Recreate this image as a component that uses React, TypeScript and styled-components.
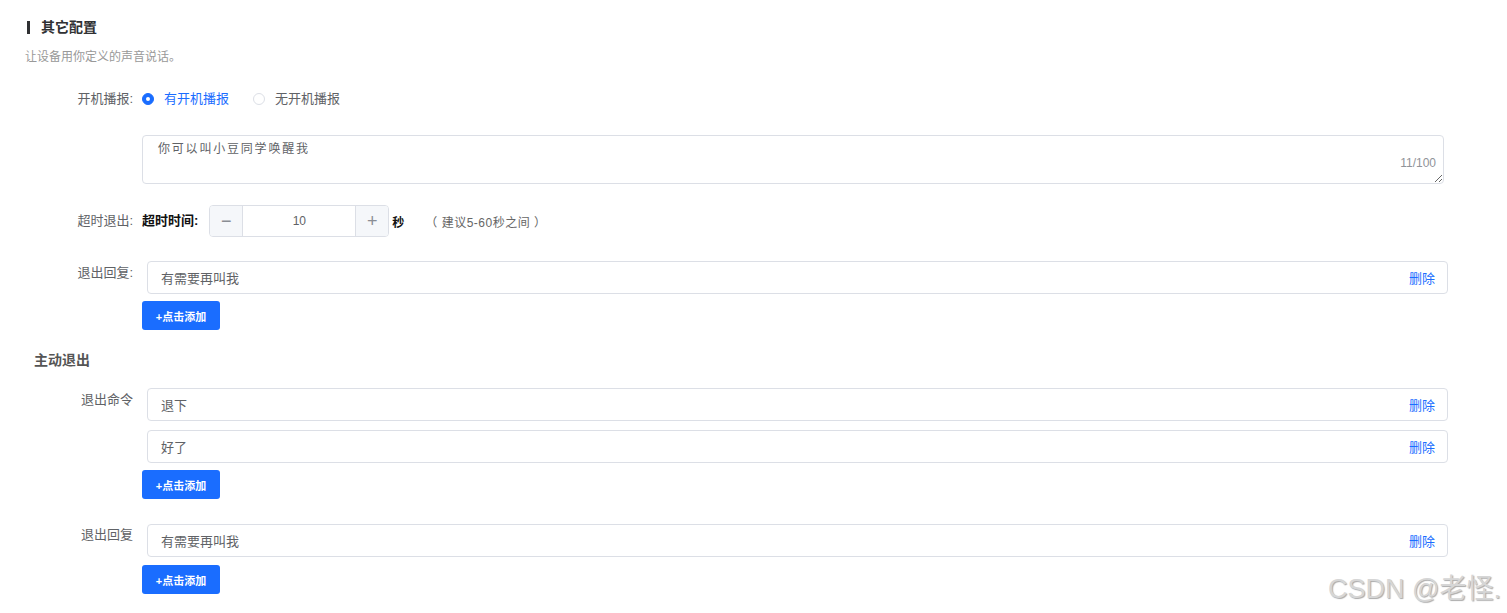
import React from 'react';
import styled, { createGlobalStyle } from 'styled-components';

const GlobalStyle = createGlobalStyle`
  html, body {
    margin: 0;
    padding: 0;
    background: #fff;
  }
  body {
    font-family: "Liberation Sans", "Noto Sans CJK SC", sans-serif;
    font-size: 13px;
    color: #606266;
  }
`;

const Page = styled.div`
  position: relative;
  width: 1507px;
  min-height: 613px;
  padding: 17px 59px 0 25px;
  box-sizing: border-box;
`;

const Title = styled.h3`
  margin: 0 0 0 2px;
  display: flex;
  align-items: center;
  gap: 11px;
  font-size: 14px;
  line-height: 20px;
  font-weight: 700;
  color: #303133;

  &::before {
    content: '';
    width: 3px;
    height: 13px;
    background: #303133;
  }
`;

const SubTitle = styled.p`
  margin: 10px 0 0;
  font-size: 12px;
  line-height: 20px;
  color: #999;
`;

const SectionTitle = styled.h4`
  margin: 20px 0 0 9px;
  font-size: 14px;
  line-height: 20px;
  font-weight: 700;
  color: #555;
`;

const FormRow = styled.div<{ top: number; align?: string }>`
  display: flex;
  align-items: ${p => p.align || 'flex-start'};
  gap: 9px;
  margin-top: ${p => p.top}px;
`;

const Label = styled.div<{ pad?: number }>`
  width: 108px;
  flex-shrink: 0;
  text-align: right;
  line-height: 20px;
  padding-top: ${p => p.pad || 0}px;
  color: #606266;
  white-space: nowrap;
`;

const Content = styled.div`
  flex: 1;
  display: flex;
  flex-direction: column;
  align-items: flex-start;
`;

const RadioGroup = styled.div`
  display: flex;
  align-items: center;
  gap: 24px;
  line-height: 20px;
`;

const RadioItem = styled.label<{ checked?: boolean }>`
  display: flex;
  align-items: center;
  gap: 10px;
  color: ${p => (p.checked ? '#1a6dff' : '#606266')};
  cursor: pointer;
`;

const RadioDot = styled.span<{ checked?: boolean }>`
  width: 12px;
  height: 12px;
  border-radius: 50%;
  box-sizing: border-box;
  border: 1px solid ${p => (p.checked ? '#1a6dff' : '#dcdfe6')};
  background: ${p => (p.checked ? '#1a6dff' : '#fff')};
  display: flex;
  align-items: center;
  justify-content: center;

  &::after {
    content: '';
    width: 4px;
    height: 4px;
    border-radius: 50%;
    background: ${p => (p.checked ? '#fff' : 'transparent')};
  }
`;

const TextAreaWrap = styled.div`
  position: relative;
  width: 1302px;
  margin-left: 117px;
  margin-top: 26px;
`;

const TextArea = styled.textarea`
  display: block;
  width: 100%;
  height: 49px;
  box-sizing: border-box;
  padding: 4px 15px;
  border: 1px solid #dcdfe6;
  border-radius: 4px;
  font-family: "Liberation Sans", "Noto Sans CJK SC", sans-serif;
  font-size: 12px;
  line-height: 18px;
  letter-spacing: 1.8px;
  color: #606266;
  outline: none;
  resize: vertical;
`;

const Counter = styled.span`
  position: absolute;
  right: 8px;
  bottom: 14px;
  font-size: 12px;
  color: #909399;
`;

const StrongText = styled.span`
  color: #111;
  font-weight: 700;
  line-height: 20px;
`;

const NumberBox = styled.div`
  display: flex;
  width: 180px;
  height: 32px;
  margin-left: 11px;
  border: 1px solid #dcdfe6;
  border-radius: 4px;
  box-sizing: border-box;
  overflow: hidden;
`;

const StepButton = styled.button`
  width: 33px;
  flex-shrink: 0;
  border: none;
  padding: 0;
  background: #f5f7fa;
  color: #8a8d94;
  font-size: 18px;
  font-weight: 300;
  display: flex;
  align-items: center;
  justify-content: center;
  cursor: pointer;

  &:first-child {
    border-right: 1px solid #dcdfe6;
  }
  &:last-child {
    border-left: 1px solid #dcdfe6;
  }
`;

const NumberValue = styled.div`
  flex: 1;
  display: flex;
  align-items: center;
  justify-content: center;
  font-size: 12px;
  color: #606266;
`;

const Unit = styled.span`
  margin-left: 3px;
  color: #111;
  font-weight: 700;
  font-size: 12px;
`;

const Hint = styled.span`
  margin-left: 21px;
  color: #666;
  font-size: 12px;
  letter-spacing: 0.5px;
`;

const TimeoutLine = styled.div`
  display: flex;
  align-items: center;
`;

const ItemList = styled.div`
  display: flex;
  flex-direction: column;
  gap: 9px;
  width: 1301px;
  margin-left: 5px;
`;

const ItemInput = styled.div`
  height: 33px;
  box-sizing: border-box;
  border: 1px solid #dcdfe6;
  border-radius: 4px;
  padding: 0 12px 0 13px;
  display: flex;
  align-items: center;
  justify-content: space-between;
  color: #606266;
  font-size: 13px;
`;

const DeleteLink = styled.span`
  color: #1a6dff;
  cursor: pointer;
`;

const AddButton = styled.button<{ gap: number }>`
  margin-top: ${p => p.gap}px;
  width: 78px;
  height: 29px;
  border: none;
  border-radius: 3px;
  background: #1a6dff;
  color: #fff;
  font-family: "Liberation Sans", "Noto Sans CJK SC", sans-serif;
  font-size: 11px;
  font-weight: 700;
  cursor: pointer;
`;

const Watermark = styled.div`
  position: absolute;
  right: 6px;
  bottom: 9px;
  font-family: "Liberation Sans", "Noto Sans CJK SC", sans-serif;
  font-size: 27px;
  line-height: 30px;
  color: #d6d6d6;
  text-shadow: 1px 1px 1px #aaa;
  pointer-events: none;
`;

const ItemGroup: React.FC<{ items: string[]; btnGap: number }> = ({ items, btnGap }) => (
  <Content>
    <ItemList>
      {items.map((t, i) => (
        <ItemInput key={i}>
          <span>{t}</span>
          <DeleteLink>删除</DeleteLink>
        </ItemInput>
      ))}
    </ItemList>
    <AddButton gap={btnGap}>+点击添加</AddButton>
  </Content>
);

const App: React.FC = () => {
  return (
    <Page>
      <GlobalStyle />
      <Title>其它配置</Title>
      <SubTitle>让设备用你定义的声音说话。</SubTitle>

      <FormRow top={22}>
        <Label>开机播报:</Label>
        <RadioGroup>
          <RadioItem checked>
            <RadioDot checked />
            有开机播报
          </RadioItem>
          <RadioItem>
            <RadioDot />
            无开机播报
          </RadioItem>
        </RadioGroup>
      </FormRow>

      <TextAreaWrap>
        <TextArea readOnly defaultValue="你可以叫小豆同学唤醒我" />
        <Counter>11/100</Counter>
      </TextAreaWrap>

      <FormRow top={21} align="center">
        <Label>超时退出:</Label>
        <TimeoutLine>
          <StrongText>超时时间:</StrongText>
          <NumberBox>
            <StepButton>−</StepButton>
            <NumberValue>10</NumberValue>
            <StepButton>+</StepButton>
          </NumberBox>
          <Unit>秒</Unit>
          <Hint>（ 建议5-60秒之间 ）</Hint>
        </TimeoutLine>
      </FormRow>

      <FormRow top={24}>
        <Label pad={2}>退出回复:</Label>
        <ItemGroup items={['有需要再叫我']} btnGap={7} />
      </FormRow>

      <SectionTitle>主动退出</SectionTitle>

      <FormRow top={18}>
        <Label pad={2}>退出命令</Label>
        <ItemGroup items={['退下', '好了']} btnGap={7} />
      </FormRow>

      <FormRow top={25}>
        <Label pad={1}>退出回复</Label>
        <ItemGroup items={['有需要再叫我']} btnGap={8} />
      </FormRow>

      <Watermark>CSDN @老怪.</Watermark>
    </Page>
  );
};

export default App;
